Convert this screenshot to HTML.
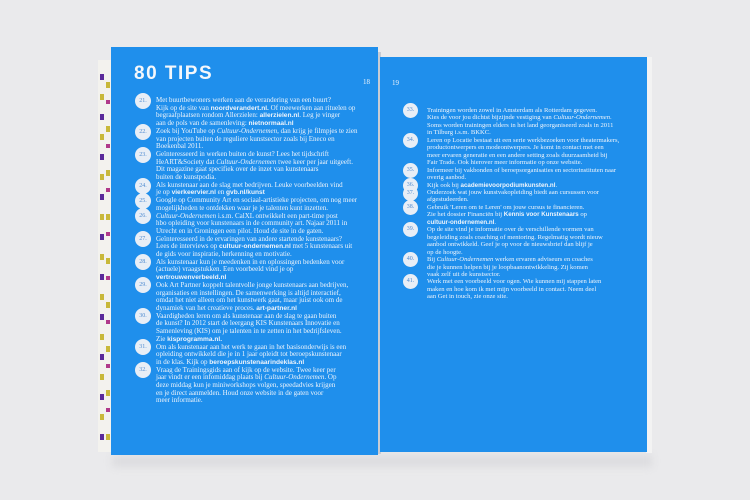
<!DOCTYPE html>
<html><head><style>
body{margin:0;width:750px;height:500px;background:#eaeaec;position:relative;overflow:hidden;font-family:"Liberation Serif",serif}
.pg{position:absolute;background:#1f8fec}
.t{position:absolute;color:#eef4fb;font-size:7px;line-height:7.7px;white-space:nowrap}
.t b{font-family:"Liberation Sans",sans-serif;font-weight:bold;font-size:6.6px}
.c{position:absolute;width:16px;height:16px;border-radius:50%;background:#e8eef6;color:#4d8ad0;font-size:6px;line-height:16px;text-align:center}
</style></head><body>
<div style="position:absolute;left:112px;top:455px;width:540px;height:12px;background:#dcdcdf;filter:blur(4px)"></div>
<div style="position:absolute;left:98px;top:60px;width:13px;height:392px;background:#f3f2ee"></div>
<div style="position:absolute;left:100px;top:60px;width:4px;height:392px;background:repeating-linear-gradient(180deg,transparent 0 14px,#5a2a9a 14px 20px,transparent 20px 34px,#c8b83a 34px 40px)"></div>
<div style="position:absolute;left:106px;top:60px;width:4px;height:392px;background:repeating-linear-gradient(180deg,transparent 0 22px,#c8b83a 22px 28px,transparent 28px 40px,#b03a8a 40px 44px)"></div>
<div class="pg" style="left:111px;top:47px;width:267px;height:408px"></div>
<div style="position:absolute;left:378px;top:52px;width:3px;height:402px;background:#c8ccd4"></div>
<div style="position:absolute;left:646px;top:57px;width:6px;height:396px;background:#f3f3f3"></div>
<div class="pg" style="left:380px;top:57px;width:267px;height:395px"></div>
<div style="position:absolute;left:134px;top:63px;color:#f4f7fb;font:bold 19px 'Liberation Sans',sans-serif;letter-spacing:1.5px;line-height:22px">80 TIPS</div>
<div class="t" style="left:363px;top:79px">18</div>
<div class="t" style="left:392px;top:80px">19</div>

<div class="t" style="left:156px;top:97px">
Met buurtbewoners werken aan de verandering van een buurt?<br>
Kijk op de site van <b>noordverandert.nl.</b> Of meewerken aan rituelen op<br>
begraafplaatsen rondom Allerzielen: <b>allerzielen.nl</b>. Leg je vinger<br>
aan de pols van de samenleving: <b>nietnormaal.nl</b><br>
Zoek bij YouTube op <i>Cultuur-Ondernemen</i>, dan krijg je filmpjes te zien<br>
van projecten buiten de reguliere kunstsector zoals bij Eneco en<br>
Boekenbal 2011.<br>
Geïnteresseerd in werken buiten de kunst? Lees het tijdschrift<br>
HeART&amp;Society dat <i>Cultuur-Ondernemen</i> twee keer per jaar uitgeeft.<br>
Dit magazine gaat specifiek over de inzet van kunstenaars<br>
buiten de kunstpodia.<br>
Als kunstenaar aan de slag met bedrijven. Leuke voorbeelden vind<br>
je op <b>vierkeervier.nl</b> en <b>gvb.nl/kunst</b><br>
Google op Community Art en sociaal-artistieke projecten, om nog meer<br>
mogelijkheden te ontdekken waar je je talenten kunt inzetten.<br>
<i>Cultuur-Ondernemen</i> i.s.m. CalXL ontwikkelt een part-time post<br>
hbo opleiding voor kunstenaars in de community art. Najaar 2011 in<br>
Utrecht en in Groningen een pilot. Houd de site in de gaten.<br>
Geïnteresseerd in de ervaringen van andere startende kunstenaars?<br>
Lees de interviews op <b>cultuur-ondernemen.nl</b> met 5 kunstenaars uit<br>
de gids voor inspiratie, herkenning en motivatie.<br>
Als kunstenaar kun je meedenken in en oplossingen bedenken voor<br>
(actuele) vraagstukken. Een voorbeeld vind je op<br>
<b>vertrouwenverbeeld.nl</b><br>
Ook Art Partner koppelt talentvolle jonge kunstenaars aan bedrijven,<br>
organisaties en instellingen. De samenwerking is altijd interactief,<br>
omdat het niet alleen om het kunstwerk gaat, maar juist ook om de<br>
dynamiek van het creatieve proces. <b>art-partner.nl</b><br>
Vaardigheden leren om als kunstenaar aan de slag te gaan buiten<br>
de kunst? In 2012 start de leergang KIS Kunstenaars Innovatie en<br>
Samenleving (KIS) om je talenten in te zetten in het bedrijfsleven.<br>
Zie <b>kisprogramma.nl.</b><br>
Om als kunstenaar aan het werk te gaan in het basisonderwijs is een<br>
opleiding ontwikkeld die je in 1 jaar opleidt tot beroepskunstenaar<br>
in de klas. Kijk op <b>beroepskunstenaarindeklas.nl</b><br>
Vraag de Trainingsgids aan of kijk op de website. Twee keer per<br>
jaar vindt er een infomiddag plaats bij <i>Cultuur-Ondernemen</i>. Op<br>
deze middag kun je miniworkshops volgen, speedadvies krijgen<br>
en je direct aanmelden. Houd onze website in de gaten voor<br>
meer informatie.</div>

<div class="c" style="left:135px;top:93px">21.</div>
<div class="c" style="left:135px;top:124px">22.</div>
<div class="c" style="left:135px;top:147px">23.</div>
<div class="c" style="left:135px;top:178px">24.</div>
<div class="c" style="left:135px;top:193px">25.</div>
<div class="c" style="left:135px;top:208px">26.</div>
<div class="c" style="left:135px;top:231px">27.</div>
<div class="c" style="left:135px;top:254px">28.</div>
<div class="c" style="left:135px;top:277px">29.</div>
<div class="c" style="left:135px;top:308px">30.</div>
<div class="c" style="left:135px;top:339px">31.</div>
<div class="c" style="left:135px;top:362px">32.</div>

<div class="t" style="left:427px;top:107px;line-height:7.45px;font-size:6.6px">
Trainingen worden zowel in Amsterdam als Rotterdam gegeven.<br>
Kies de voor jou dichtst bijzijnde vestiging van <i>Cultuur-Ondernemen</i>.<br>
Soms worden trainingen elders in het land georganiseerd zoals in 2011<br>
in Tilburg i.s.m. BKKC.<br>
Leren op Locatie bestaat uit een serie werkbezoeken voor theatermakers,<br>
productontwerpers en modeontwerpers. Je komt in contact met een<br>
meer ervaren generatie en een andere setting zoals duurzaamheid bij<br>
Fair Trade. Ook hierover meer informatie op onze website.<br>
Informeer bij vakbonden of beroepsorganisaties en sectorinstituten naar<br>
overig aanbod.<br>
Kijk ook bij <b style="font-size:6.2px">academievoorpodiumkunsten.nl</b>.<br>
Onderzoek wat jouw kunstvakopleiding biedt aan cursussen voor<br>
afgestudeerden.<br>
Gebruik 'Leren om te Leren' om jouw cursus te financieren.<br>
Zie het dossier Financiën bij <b style="font-size:6.2px">Kennis voor Kunstenaars</b> op<br>
<b style="font-size:6.2px">cultuur-ondernemen.nl</b>.<br>
Op de site vind je informatie over de verschillende vormen van<br>
begeleiding zoals coaching of mentoring. Regelmatig wordt nieuw<br>
aanbod ontwikkeld. Geef je op voor de nieuwsbrief dan blijf je<br>
op de hoogte.<br>
Bij <i>Cultuur-Ondernemen</i> werken ervaren adviseurs en coaches<br>
die je kunnen helpen bij je loopbaanontwikkeling. Zij komen<br>
vaak zelf uit de kunstsector.<br>
Werk met een voorbeeld voor ogen. Wie kunnen mij stappen laten<br>
maken en hoe kom ik met mijn voorbeeld in contact. Neem deel<br>
aan Get in touch, zie onze site.</div>

<div class="c" style="left:403px;top:103px;width:15px;height:15px;line-height:15px">33.</div>
<div class="c" style="left:403px;top:133px;width:15px;height:15px;line-height:15px">34.</div>
<div class="c" style="left:403px;top:163px;width:15px;height:15px;line-height:15px">35.</div>
<div class="c" style="left:403px;top:178px;width:15px;height:15px;line-height:15px">36.</div>
<div class="c" style="left:403px;top:186px;width:15px;height:15px;line-height:15px">37.</div>
<div class="c" style="left:403px;top:200px;width:15px;height:15px;line-height:15px">38.</div>
<div class="c" style="left:403px;top:222px;width:15px;height:15px;line-height:15px">39.</div>
<div class="c" style="left:403px;top:252px;width:15px;height:15px;line-height:15px">40.</div>
<div class="c" style="left:403px;top:274px;width:15px;height:15px;line-height:15px">41.</div>
</body></html>
